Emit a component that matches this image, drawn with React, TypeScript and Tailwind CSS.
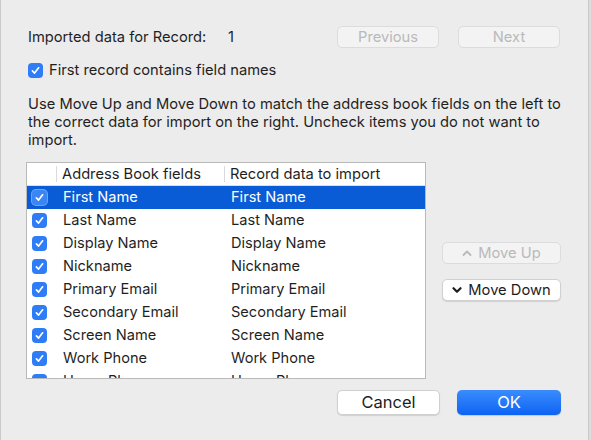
import { ReactNode } from "react";

const rows = [
  "First Name",
  "Last Name",
  "Display Name",
  "Nickname",
  "Primary Email",
  "Secondary Email",
  "Screen Name",
  "Work Phone",
  "Home Phone",
];

function Check({ selected = false }: { selected?: boolean }) {
  return (
    <span
      className={`flex h-[15px] w-[15px] shrink-0 items-center justify-center rounded-[4px] ${
        selected ? "bg-[#3b86f5] ring-1 ring-[#6aa4ff]" : "bg-[#2f7df6]"
      }`}
    >
      <svg viewBox="0 0 12 12" className="h-[11px] w-[11px]" fill="none" stroke="white" strokeWidth={1.8} strokeLinecap="round" strokeLinejoin="round">
        <path d="M2.6 6.4 L5 8.8 L9.4 3" />
      </svg>
    </span>
  );
}

function Btn({
  children,
  disabled = false,
  className = "",
}: {
  children: ReactNode;
  disabled?: boolean;
  className?: string;
}) {
  return (
    <button
      type="button"
      className={`flex items-center justify-center rounded-[5px] ${
        disabled
          ? "border border-[#dcdcdc] bg-[#f3f3f3] text-[#b9b9b9]"
          : "border border-[#d0d0d0] bg-white text-[#1d1d1d] shadow-[0_1px_1px_rgba(0,0,0,0.12)]"
      } ${className}`}
    >
      {children}
    </button>
  );
}

export default function App() {
  return (
    <div className="flex h-[440px] w-[591px] overflow-hidden bg-[#ececec] font-['Inter',sans-serif] text-[14.7px] text-[#1f1f1f]">
      <div className="w-px bg-[#c9c9c9]" />
      <div className="flex flex-1 flex-col pl-[27px] pt-[26px]">
        <div className="flex h-[22px] items-center">
          <span className="w-[200px]">Imported data for Record:</span>
          <span className="w-[109px]">1</span>
          <Btn disabled className="h-[22px] w-[102px]">Previous</Btn>
          <Btn disabled className="ml-[19px] h-[22px] w-[102px]">Next</Btn>
        </div>

        <div className="mt-[15px] flex h-[15px] items-center gap-[6px]">
          <Check />
          <span>First record contains field names</span>
        </div>

        <p className="mt-[17px] w-[545px] leading-[18px]">
          Use Move Up and Move Down to match the address book fields on the left to the correct data for import on the right. Uncheck items you do not want to import.
        </p>

        <div className="mt-[13px] flex">
          <div className="-ml-[2px] h-[217px] w-[400px] overflow-hidden border border-[#b9b9b9] bg-white">
            <div className="flex h-[23px] items-center border-b border-[#dedede]">
              <div className="h-full w-[29px]" />
              <div className="flex h-full w-[168px] items-center">
                <span className="h-[16px] w-px bg-[#dadada]" />
                <span className="ml-[5px]">Address Book fields</span>
              </div>
              <div className="flex h-full flex-1 items-center">
                <span className="h-[16px] w-px bg-[#dadada]" />
                <span className="ml-[5px]">Record data to import</span>
              </div>
            </div>
            {rows.map((r, i) => (
              <div
                key={r}
                className={`flex h-[23px] items-center text-[14.6px] ${
                  i === 0 ? "bg-[#0a5bd6] text-white" : ""
                }`}
              >
                <div className="flex w-[29px] pl-[5px]">
                  <Check selected={i === 0} />
                </div>
                <div className="w-[168px] pl-[7px]">{r}</div>
                <div className="flex-1 pl-[7px]">{r}</div>
              </div>
            ))}
          </div>

          <div className="ml-[16px] flex flex-col pt-[80px]">
            <Btn disabled className="h-[22px] w-[119px] gap-[6px]">
              <svg viewBox="0 0 10 6" className="h-[6px] w-[10px]" fill="none" stroke="currentColor" strokeWidth={1.8} strokeLinecap="round" strokeLinejoin="round">
                <path d="M1.5 5 L5 1.5 L8.5 5" />
              </svg>
              Move Up
            </Btn>
            <Btn className="mt-[15px] h-[22px] w-[119px] gap-[6px]">
              <svg viewBox="0 0 10 6" className="h-[6px] w-[10px]" fill="none" stroke="currentColor" strokeWidth={2.2} strokeLinecap="round" strokeLinejoin="round">
                <path d="M1.5 1.2 L5 4.7 L8.5 1.2" />
              </svg>
              Move Down
            </Btn>
          </div>
        </div>

        <div className="mt-[11px] flex pl-[309px]">
          <Btn className="h-[25px] w-[103px] text-[16.5px]">Cancel</Btn>
          <button
            type="button"
            className="ml-[17px] flex h-[25px] w-[104px] items-center justify-center rounded-[5px] bg-gradient-to-b from-[#3a8cfd] to-[#0b63f3] text-[16.5px] text-white shadow-[0_1px_1px_rgba(0,0,0,0.15)]"
          >
            OK
          </button>
        </div>
      </div>
      <div className="w-[3px] border-l border-[#c9c9c9] bg-[#dcdcdc]" />
    </div>
  );
}
